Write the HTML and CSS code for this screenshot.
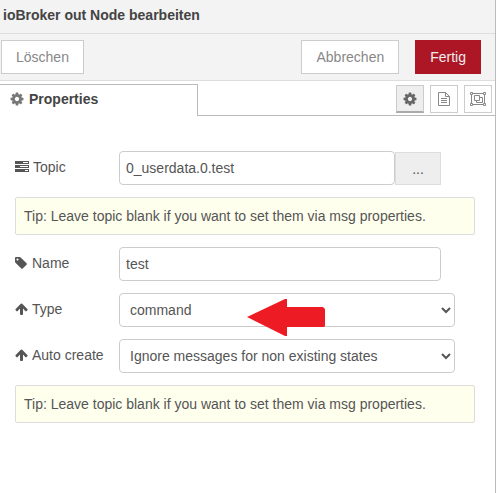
FILE: index.html
```html
<!DOCTYPE html>
<html lang="de">
<head>
    <meta charset="UTF-8">
    <meta name="viewport" content="width=device-width, initial-scale=1.0">
    <title>ioBroker out Node bearbeiten</title>
    <link rel="stylesheet" href="styles.css">
</head>
<body>

    <!-- Shared icons -->
    <svg class="icon-defs" aria-hidden="true">
        <symbol id="icon-cog" viewBox="64 64 1664 1664">
            <path d="M1152 896q0-106-75-181t-181-75-181 75-75 181 75 181 181 75 181-75 75-181zm512-109v222q0 12-8 23t-20 13l-185 28q-19 54-39 91 35 50 107 138 10 12 10 25t-9 23q-27 37-99 108t-94 71q-12 0-26-9l-138-108q-44 23-91 38-16 136-29 186-7 28-36 28h-222q-14 0-24.500-8.500t-11.500-21.500l-28-184q-49-16-90-37l-141 107q-10 9-25 9-14 0-25-11-126-114-165-168-7-10-7-23 0-12 8-23 15-21 51-66.500t54-70.500q-27-50-41-99l-183-27q-13-2-21-12.500t-8-23.500v-222q0-12 8-23t19-13l186-28q14-46 39-92-40-57-107-138-10-12-10-24 0-10 9-23 26-36 98.500-107.500t94.500-71.500q13 0 26 10l138 107q44-23 91-38 16-136 29-186 7-28 36-28h222q14 0 24.500 8.500t11.500 21.500l28 184q49 16 90 37l142-107q9-9 24-9 13 0 25 10 129 119 165 170 7 8 7 22 0 12-8 23-15 21-51 66.500t-54 70.500q26 50 41 98l183 28q13 2 21 12.500t8 23.500z"/>
        </symbol>
        <symbol id="icon-arrow-up" viewBox="64 0 1664 1792">
            <path d="M1675 971q0 51-37 90l-75 75q-38 38-91 38-54 0-90-38l-294-293v704q0 52-37.500 84.500t-90.500 32.500h-128q-53 0-90.500-32.500t-37.500-84.500v-704l-294 293q-36 38-90 38t-90-38l-75-75q-38-38-38-90 0-53 38-91l651-651q35-37 90-37 54 0 91 37l651 651q37 39 37 91z"/>
        </symbol>
        <symbol id="icon-tag" viewBox="128 0 1664 1792">
            <path d="M576 448q0-53-37.500-90.500t-90.500-37.500-90.500 37.500-37.500 90.500 37.500 90.500 90.500 37.500 90.500-37.500 37.500-90.500zm1067 576q0 53-37 90l-491 492q-39 37-91 37-53 0-90-37l-715-716q-38-37-64.500-101t-26.500-117v-416q0-52 38-90t90-38h416q53 0 117 26.500t102 64.500l715 714q37 39 37 91z"/>
        </symbol>
        <symbol id="icon-tasks" viewBox="0 0 14 14">
            <path fill-rule="evenodd" d="M0 1h14v3H0zM8 2v1h5V2zM0 5h14v3H0zM5 6v1h8V6zM0 9h14v3H0zM10 10v1h3v-1z"/>
        </symbol>
        <symbol id="icon-file" viewBox="0 0 14 16">
            <path fill="none" stroke="currentColor" d="M1.500 1.500h7l4 4v9h-11zM8.500 1.500v4h4M4 7.500h6M4 9.500h6M4 11.500h6"/>
        </symbol>
        <symbol id="icon-group" viewBox="0 0 16 14">
            <path fill="none" stroke="currentColor" d="M2.500 1.500h11M2.500 12.500h11M1.500 2.500v9M14.500 2.500v9M.5.500h2v2h-2zM13.500.500h2v2h-2zM.5 11.500h2v2h-2zM13.500 11.500h2v2h-2zM4.500 3.500h5v5h-5zM9.500 5.500h3v5h-6v-2"/>
        </symbol>
    </svg>

    <div class="tray">
        <h1 class="tray-header">ioBroker out Node bearbeiten</h1>

        <div class="tray-toolbar">
            <button type="button" class="btn">Löschen</button>
            <div class="toolbar-right">
                <button type="button" class="btn">Abbrechen</button>
                <button type="submit" form="nodeForm" class="btn btn-primary">Fertig</button>
            </div>
        </div>

        <div class="tabs">
            <a href="#nodeForm" class="tab"><svg class="icon"><use href="#icon-cog"/></svg>Properties</a>
            <div class="tab-buttons">
                <button type="button" class="tab-btn selected" aria-label="Properties"><svg class="icon"><use href="#icon-cog"/></svg></button>
                <button type="button" class="tab-btn" aria-label="Description"><svg class="icon-lg"><use href="#icon-file"/></svg></button>
                <button type="button" class="tab-btn" aria-label="Appearance"><svg class="icon-lg"><use href="#icon-group"/></svg></button>
            </div>
        </div>

        <form id="nodeForm" class="node-form">
            <div class="form-row">
                <label for="topic"><svg class="icon"><use href="#icon-tasks"/></svg>Topic</label>
                <input type="text" id="topic" class="input-topic" value="0_userdata.0.test">
                <button type="button" class="btn-select" aria-label="Select topic">...</button>
            </div>

            <div class="form-tips">Tip: Leave topic blank if you want to set them via msg properties.</div>

            <div class="form-row">
                <label for="name"><svg class="icon icon-narrow"><use href="#icon-tag"/></svg>Name</label>
                <input type="text" id="name" class="input-name" value="test">
            </div>

            <div class="form-row">
                <label for="type"><svg class="icon icon-narrow"><use href="#icon-arrow-up"/></svg>Type</label>
                <select id="type">
                    <option>command</option>
                    <option>value</option>
                </select>
                <svg class="pointer" viewBox="0 0 78 37" aria-hidden="true"><path d="M0 18 38 0h2v8h36l2 2v17l-1 1H40v9h-2z"/></svg>
            </div>

            <div class="form-row">
                <label for="autocreate"><svg class="icon icon-narrow"><use href="#icon-arrow-up"/></svg>Auto create</label>
                <select id="autocreate">
                    <option>Ignore messages for non existing states</option>
                </select>
            </div>

            <div class="form-tips">Tip: Leave topic blank if you want to set them via msg properties.</div>
        </form>
    </div>

</body>
</html>
```

FILE: styles.css
```css
/* General Styles */
* {
    margin: 0;
    padding: 0;
    box-sizing: border-box;
}

body {
    font-family: "Liberation Sans", Arial, sans-serif;
    font-size: 14px;
    line-height: 20px;
    color: #555;
    background-color: #fff;
}

button, input, select {
    font: inherit;
    color: inherit;
}

button {
    cursor: pointer;
}

/* Icons */
.icon-defs {
    display: none;
}

.icon {
    width: 14px;
    height: 14px;
    flex: none;
    fill: currentColor;
}

.icon-narrow {
    width: 13px;
}

.icon-lg {
    width: 16px;
    height: 16px;
    flex: none;
}

/* Tray */
.tray {
    min-height: 100vh;
    margin-right: 1px;
    border-right: 1px solid #bbb;
}

.tray-header {
    padding: 5px 3px 8px;
    font-size: 14px;
    font-weight: bold;
    color: #444;
    background-color: #f3f3f3;
    border-bottom: 1px solid #ddd;
}

.tray-toolbar {
    display: flex;
    justify-content: space-between;
    padding: 6px 14px 6px 1px;
    background-color: #f3f3f3;
    border-bottom: 1px solid #ddd;
}

.toolbar-right {
    display: flex;
    gap: 16px;
}

.btn {
    height: 34px;
    padding: 0 14px;
    color: #888;
    background-color: #fff;
    border: 1px solid #ccc;
}

.btn-primary {
    color: #eee;
    background-color: #ad1625;
    border-color: #ad1625;
}

/* Tabs */
.tabs {
    display: flex;
    justify-content: space-between;
    padding-top: 3px;
    box-shadow: inset 0 -1px #bbb;
}

.tab {
    display: flex;
    align-items: center;
    gap: 5px;
    width: 40%;
    height: 32px;
    padding: 0 10px 4px;
    font-weight: bold;
    color: #444;
    text-decoration: none;
    background-color: #fff;
    border-top: 1px solid #bbb;
    border-right: 1px solid #bbb;
}

.tab .icon {
    color: #777;
}

.tab-buttons {
    display: flex;
    gap: 6px;
    padding: 1px 3px 0 0;
}

.tab-btn {
    display: flex;
    align-items: center;
    justify-content: center;
    width: 28px;
    height: 28px;
    color: #888;
    background-color: #fff;
    border: 1px solid #ccc;
}

.tab-btn.selected {
    color: #666;
    background-color: #eee;
    border-bottom: 2px solid #aaa;
}

/* Node Form */
.node-form {
    display: flex;
    flex-direction: column;
    gap: 12px;
    padding: 35px 20px 20px 15px;
}

.form-row {
    display: flex;
    position: relative;
}

.form-row label {
    display: flex;
    align-items: center;
    gap: 4px;
    flex: none;
    width: 104px;
    height: 32px;
}

.form-row input, .form-row select {
    height: 34px;
    padding: 4px 6px;
    background-color: #fff;
    border: 1px solid #ccc;
    border-radius: 4px;
}

.form-row .input-topic {
    width: 60%;
}

.form-row .input-name {
    width: 70%;
}

.form-row select {
    width: 73%;
}

.btn-select {
    width: 10%;
    height: 33px;
    align-self: flex-end;
    background-color: #eee;
    border: 1px solid #ddd;
}

.form-tips {
    padding: 8px;
    background-color: #ffe;
    border: 1px solid #ddd;
    border-radius: 2px;
}

/* Arrow laid over the type field */
.pointer {
    position: absolute;
    top: 6px;
    left: 232px;
    width: 78px;
    height: 37px;
    fill: #ed1c24;
    pointer-events: none;
    z-index: 1;
}
```
